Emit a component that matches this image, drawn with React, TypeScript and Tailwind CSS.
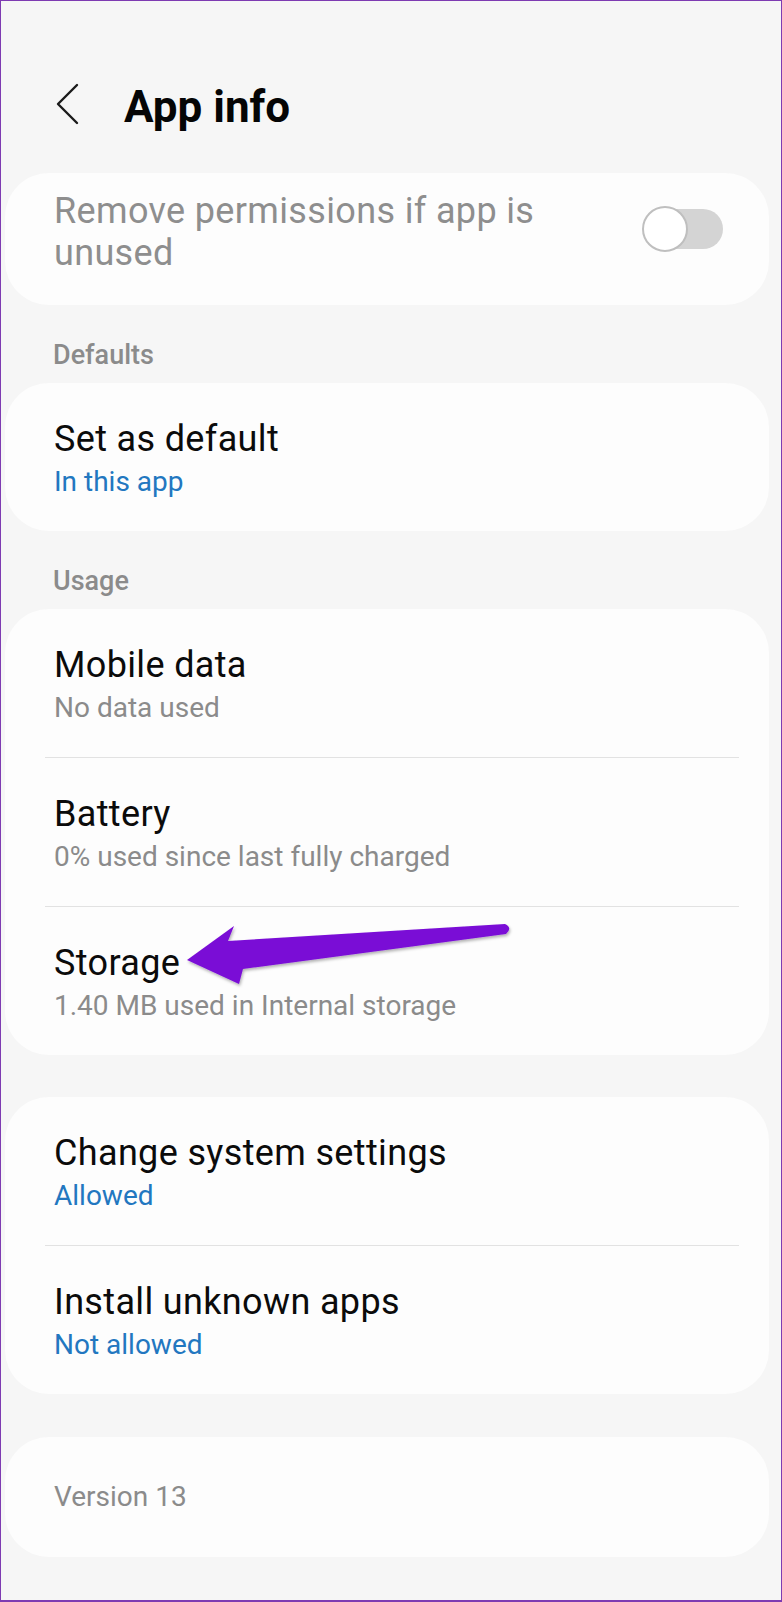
import React from "react";

type Row = { title: string; sub: string; blue?: boolean };

function Card({ rows }: { rows: Row[] }) {
  return (
    <div className="ml-[4px] mr-[12px] rounded-[44px] bg-[#fdfdfd] flex flex-col">
      {rows.map((r, i) => (
        <React.Fragment key={r.title}>
          {i > 0 && <div className="ml-[40px] mr-[30px] h-px bg-[#e2e2e2]" />}
          <div className="pl-[49px] pr-[30px] pt-[35px] pb-[27px] flex flex-col">
            <div className="text-[36px] leading-[42px] tracking-[0.35px] text-[#0b0b0b]">{r.title}</div>
            <div
              className={
                r.blue
                  ? "text-[28px] leading-[44px] text-[#2277c0]"
                  : "text-[28px] leading-[44px] text-[#8b8b8b]"
              }
            >
              {r.sub}
            </div>
          </div>
        </React.Fragment>
      ))}
    </div>
  );
}

function SectionHeader({ label }: { label: string }) {
  return (
    <div className="pl-[52px] pt-[31px] pb-[9px] text-[27px] leading-[38px] font-medium text-[#8b8b8b]">
      {label}
    </div>
  );
}

export default function App() {
  return (
    <div className="relative w-[782px] h-[1602px] overflow-hidden bg-[#f6f6f6] border border-b-2 border-[#7e3bb2] font-['Roboto',sans-serif]">
      {/* Header */}
      <div className="flex items-center pt-[80px]">
        <svg
          className="ml-[53px] -mt-[4px]"
          width="26"
          height="44"
          viewBox="0 0 26 44"
          fill="none"
        >
          <polyline
            points="23,2 4,21 23,40"
            stroke="#1a1a1a"
            strokeWidth="2.4"
            strokeLinecap="round"
            strokeLinejoin="round"
          />
        </svg>
        <div className="ml-[44px] text-[44px] leading-[52px] font-bold text-[#050505]">
          App info
        </div>
      </div>

      {/* Card 1: toggle */}
      <div className="mt-[40px] ml-[4px] mr-[12px] rounded-[44px] bg-[#fdfdfd] flex items-start pl-[49px] pr-[46px] pt-[17px] pb-[31px]">
        <div className="flex-1 text-[36px] leading-[42px] tracking-[0.35px] text-[#8e8e8e]">
          Remove permissions if app is
          <br />
          unused
        </div>
        <div className="relative mt-[16px] w-[81px] h-[46px]">
          <div className="absolute right-0 top-[3px] w-[76px] h-[40px] rounded-full bg-[#d4d4d4]" />
          <div className="absolute left-0 top-0 w-[46px] h-[46px] rounded-full bg-white border-2 border-[#bfbfbf]" />
        </div>
      </div>

      <SectionHeader label="Defaults" />
      <Card rows={[{ title: "Set as default", sub: "In this app", blue: true }]} />

      <SectionHeader label="Usage" />
      <Card
        rows={[
          { title: "Mobile data", sub: "No data used" },
          { title: "Battery", sub: "0% used since last fully charged" },
          { title: "Storage", sub: "1.40 MB used in Internal storage" },
        ]}
      />

      <div className="mt-[42px]">
        <Card
          rows={[
            { title: "Change system settings", sub: "Allowed", blue: true },
            { title: "Install unknown apps", sub: "Not allowed", blue: true },
          ]}
        />
      </div>

      <div className="mt-[43px] ml-[4px] mr-[12px] h-[120px] rounded-[44px] bg-[#fdfdfd] flex items-center pl-[49px]">
        <div className="text-[28px] leading-[40px] text-[#8b8b8b]">Version 13</div>
      </div>

      {/* Annotation arrow */}
      <svg
        className="absolute -left-px -top-px pointer-events-none"
        width="782"
        height="1602"
        viewBox="0 0 782 1602"
      >
        <defs>
          <filter id="sh" x="-10%" y="-50%" width="120%" height="200%">
            <feDropShadow dx="1" dy="2" stdDeviation="1.5" floodColor="#000" floodOpacity="0.3" />
          </filter>
        </defs>
        <path
          d="M187,960 L234,926 L228,941 L505,924 Q513,928 506,934 L243,969 L239,984 Z"
          fill="#7a0ed6"
          filter="url(#sh)"
          strokeLinejoin="round"
        />
      </svg>
    </div>
  );
}
